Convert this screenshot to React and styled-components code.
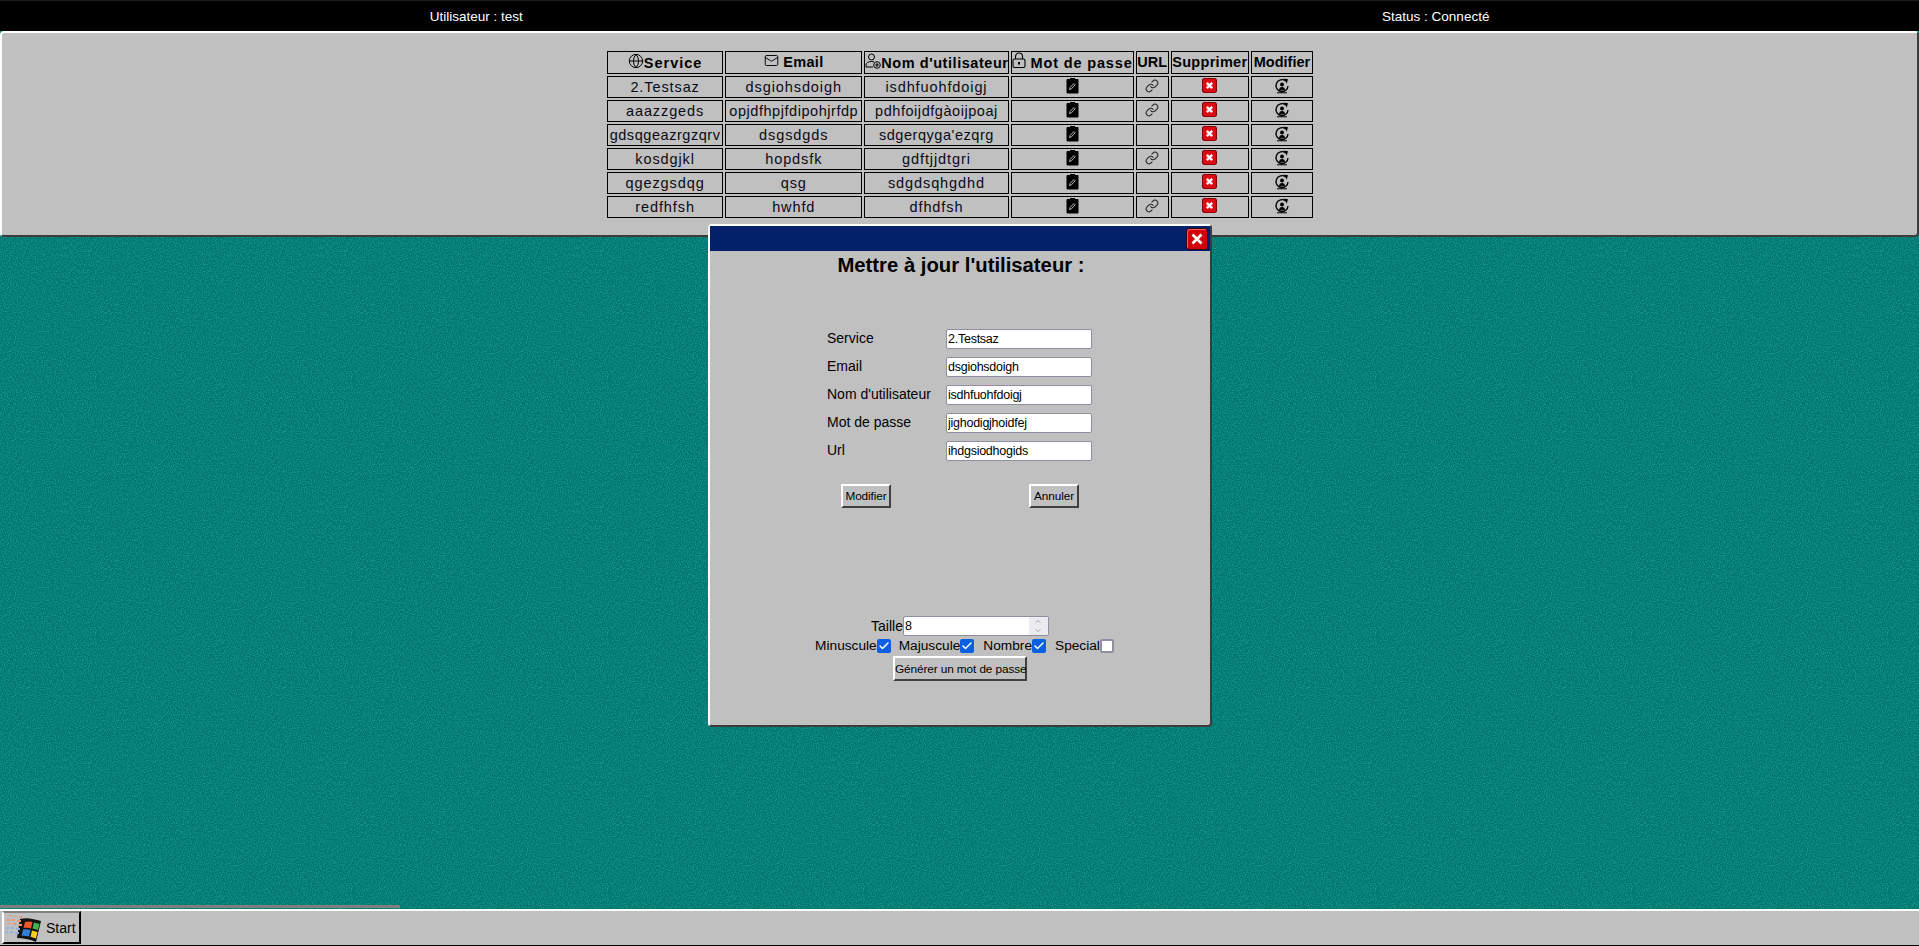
import React from 'react'
import styled, { createGlobalStyle } from 'styled-components'
import { Globe, Mail, Link, ChevronUp, ChevronDown, Check } from 'lucide-react'

const noise = `data:image/svg+xml,${encodeURIComponent(
  `<svg xmlns="http://www.w3.org/2000/svg" width="256" height="256"><filter id="n" color-interpolation-filters="sRGB"><feTurbulence type="fractalNoise" baseFrequency="0.85" numOctaves="2" stitchTiles="stitch"/><feColorMatrix values="0 0 0 0 0.08 0 0 0 0 0.6 0 0 0 0 0.56 2.4 0 0 0 -0.85"/></filter><rect width="256" height="256" fill="#00716d"/><rect width="256" height="256" filter="url(#n)"/></svg>`
)}`

const GlobalStyle = createGlobalStyle`
    html, body {
        margin: 0;
        padding: 0;
        height: 100%;
        overflow: hidden;
    }
    body {
        font-family: "Liberation Sans", Arial, sans-serif;
        color: #000;
    }
    * {
        box-sizing: border-box;
    }
`

const Page = styled.div`
    display: flex;
    flex-direction: column;
    height: 946px;
    position: relative;
    background-color: #008080;
    background-image: url("${noise}");
`

const Header = styled.header`
    display: grid;
    grid-template-columns: 1fr 1fr;
    height: 31px;
    align-items: center;
    justify-items: center;
    background: #000;
    border-top: 1px solid #1a1a22;
    color: #fff;
    font-size: 13.5px;
`

const HeaderText = styled.span`
    padding-right: 7px;
`

const ListPanel = styled.section`
    display: flex;
    justify-content: center;
    height: 206px;
    padding: 18px 0 0 1px;
    background: #c0c0c0;
    border-top: 2px solid #fff;
    border-left: 2px solid #fff;
    border-right: 2px solid #3c3c3c;
    border-bottom: 2px solid #3c3c3c;
    border-radius: 4px;
`

const Table = styled.table`
    border-collapse: separate;
    border-spacing: 2px;
    table-layout: fixed;
    width: 710px;
    height: 171px;
    margin-top: -2px;
`

const Th = styled.th`
    width: ${p => p.$w}px;
    height: 22px;
    padding: 0 0 2px;
    border: 1px solid #000;
    font-size: 14.5px;
    line-height: 16px;
    font-weight: 700;
    letter-spacing: ${p => p.$ls || 0}px;
    white-space: nowrap;
    overflow: hidden;

    svg {
        vertical-align: -1px;
    }
`

const Td = styled.td`
    height: 22px;
    padding: 1px 0 0;
    border: 1px solid #000;
    font-size: 14.5px;
    letter-spacing: ${p => p.$tight ? 0.55 : 0.9}px;
    text-align: center;
    white-space: nowrap;
    overflow: hidden;
    line-height: 1;
    color: #0a0a14;

    svg {
        display: block;
        margin: -4px auto 0;
    }
`

const Desktop = styled.main`
    flex: 1;
    display: flex;
    align-items: flex-end;
`

const DockEdge = styled.div`
    width: 400px;
    height: 3px;
    margin-bottom: 1px;
    background: #7f7f7f;
`

const Taskbar = styled.footer`
    display: flex;
    height: 37px;
    padding: 0 0 0 2px;
    background: #c0c0c0;
    border-top: 2px solid #fff;
    border-bottom: 1px solid #000;
`

const StartButton = styled.button`
    display: flex;
    align-items: center;
    gap: 5px;
    width: 79px;
    height: 33px;
    padding: 0 0 0 1px;
    background: #c0c0c0;
    border: 0;
    border-top: 2px solid #808080;
    border-left: 2px solid #fff;
    border-right: 2px solid #000;
    border-bottom: 2px solid #000;
    font-family: inherit;
    font-size: 14px;
`

const Modal = styled.div`
    position: absolute;
    left: 708px;
    top: 224px;
    width: 504px;
    height: 503px;
    display: flex;
    flex-direction: column;
    background: #c0c0c0;
    border-top: 2px solid #fff;
    border-left: 2px solid #fff;
    border-right: 2px solid #3c3c3c;
    border-bottom: 2px solid #3c3c3c;
    border-radius: 4px;
`

const TitleBar = styled.div`
    display: flex;
    justify-content: flex-end;
    align-items: center;
    height: 25px;
    padding-right: 2px;
    background: #03216a;
`

const CloseButton = styled.button`
    display: flex;
    align-items: center;
    justify-content: center;
    width: 22px;
    height: 22px;
    padding: 0;
    border: 1px solid #33050f;
    border-radius: 3px;
    background: #d3000c;
    box-shadow: inset 1px 1px 0 #ff5a55;
`

const ModalTitle = styled.h2`
    margin: 0;
    height: 78px;
    padding: 2px 0 0 2px;
    font-size: 20.3px;
    line-height: 24px;
    font-weight: 700;
    text-align: center;
`

const Form = styled.form`
    display: flex;
    flex-direction: column;
    gap: 8px;
    padding-left: 117px;
`

const Field = styled.label`
    display: grid;
    grid-template-columns: 119px 146px;
    align-items: center;
    height: 20px;
    font-size: 14px;
`

const FieldName = styled.span`
    margin-bottom: 2px;
`

const Input = styled.input`
    width: ${p => p.$w || 146}px;
    height: 20px;
    padding: 0 1px;
    background: #fff;
    border: 1px solid #8f8f9d;
    border-radius: 2px;
    font-family: inherit;
    font-size: 12.5px;
    letter-spacing: -0.25px;
    color: #000;
    outline: none;
`

const Actions = styled.div`
    display: flex;
    justify-content: space-between;
    width: 238px;
    margin: 15px 0 0 14px;
`

const Win95Button = styled.button`
    height: ${p => p.$h || 24}px;
    width: ${p => p.$w}px;
    margin-left: ${p => p.$shift || 0}px;
    padding: 0;
    background: #c0c0c0;
    border-top: 2px solid #fff;
    border-left: 2px solid #fff;
    border-right: 2px solid #404040;
    border-bottom: 2px solid #404040;
    font-family: inherit;
    font-size: 11.8px;
    letter-spacing: -0.1px;
    white-space: nowrap;
    color: #000;
`

const Generator = styled.div`
    display: flex;
    flex-direction: column;
    align-items: center;
    margin: 108px 0 0 -2px;
    font-size: 14px;
`

const SizeRow = styled.div`
    display: flex;
    align-items: center;
    height: 20px;
    padding-left: 2px;
`

const SpinBox = styled.div`
    position: relative;
    display: flex;
`

const Spin = styled.span`
    position: absolute;
    right: 1px;
    top: 1px;
    bottom: 1px;
    width: 19px;
    display: flex;
    flex-direction: column;
    align-items: center;
    justify-content: center;
    background: #ececf0;
    color: #8a8a94;
`

const CheckRow = styled.div`
    display: flex;
    align-items: center;
    height: 17px;
    margin: 1px 0 2px 11px;
    font-size: 13.7px;
`

const CheckLabel = styled.label`
    display: flex;
    align-items: center;
    margin-right: ${p => p.$gap || 0}px;
`

const Box = styled.span`
    display: flex;
    align-items: center;
    justify-content: center;
    width: 14px;
    height: 14px;
    border-radius: 2px;
    background: ${p => p.$on ? '#0b5fe0' : '#fff'};
    border: ${p => p.$on ? '0' : '2px solid #8f8f9d'};
    color: #fff;
`

const rows = [
    ['2.Testsaz', 'dsgiohsdoigh', 'isdhfuohfdoigj', true],
    ['aaazzgeds', 'opjdfhpjfdipohjrfdp', 'pdhfoijdfgàoijpoaj', true],
    ['gdsqgeazrgzqrv', 'dsgsdgds', "sdgerqyga'ezqrg", false],
    ['kosdgjkl', 'hopdsfk', 'gdftjjdtgri', true],
    ['qgezgsdqg', 'qsg', 'sdgdsqhgdhd', false],
    ['redfhfsh', 'hwhfd', 'dfhdfsh', true],
]

const fields = [
    ['Service', '2.Testsaz'],
    ['Email', 'dsgiohsdoigh'],
    ["Nom d'utilisateur", 'isdhfuohfdoigj'],
    ['Mot de passe', 'jighodigjhoidfej'],
    ['Url', 'ihdgsiodhogids'],
]

const UserAddIcon = () => (
    <svg width="16" height="16" viewBox="0 0 16 16" fill="none" stroke="#000" strokeWidth="1">
        <circle cx="6.500" cy="4" r="3" />
        <path d="M1 14v-2c0-2 2-3.500 5.500-3.500 1 0 2 .1 2.500.4M1 14h7" />
        <circle cx="12" cy="12" r="3.300" fill="#c0c0c0" />
        <path d="M12 10v4M10 12h4" />
    </svg>
)

const LockIcon = () => (
    <svg width="14" height="17" viewBox="0 0 14 17" fill="none" stroke="#000" strokeWidth="1.100">
        <path d="M3.500 7V4.500a3.500 3.500 0 0 1 7 0V7" />
        <rect x="1" y="7" width="12" height="8.500" rx="1.500" />
        <path d="M7 10v2.500" strokeWidth="2" />
    </svg>
)

const ClipboardIcon = () => (
    <svg width="13" height="17" viewBox="0 0 13 17">
        <path d="M4 2V1h5v1h2.500a1 1 0 0 1 1 1v12.500a1 1 0 0 1-1 1h-10a1 1 0 0 1-1-1V3a1 1 0 0 1 1-1z" fill="#000" />
        <path d="M3.500 12.500l.6-2 3.800-4 1.300 1.300-3.800 4z" fill="none" stroke="#c8c8c8" strokeWidth="0.9" />
    </svg>
)

const DeleteIcon = () => (
    <svg width="15" height="15" viewBox="0 0 14 14">
        <rect x="0.500" y="0.500" width="13" height="13" rx="2" fill="#dd0a14" stroke="#8c0008" />
        <path d="M4.500 4.500l5 5M9.500 4.500l-5 5" stroke="#fff" strokeWidth="2.200" />
    </svg>
)

const ModifyIcon = () => (
    <svg width="16" height="16" viewBox="0 0 16 16">
        <path d="M11.500 2.800A6 6 0 1 0 14 8" fill="none" stroke="#000" strokeWidth="1.400" />
        <path d="M9.500 .5l4.500.7-1.200 4.300z" fill="#000" />
        <circle cx="8" cy="6.500" r="2" fill="#000" />
        <path d="M5 12.500c0-2.500 1.200-3.500 3-3.500s3 1 3 3.500z" fill="#000" />
        <path d="M3 14.800h10" stroke="#000" />
    </svg>
)

const WindowsLogo = () => (
    <svg width="36" height="30" viewBox="0 0 36 30">
        <path d="M15 6c7-2 14 0 21 2l-5 21c-7-3-13-4-19-4z" fill="#111" />
        <path d="M20 9c2.500-.8 5-.6 7.500 0l-1.500 6.500c-2.500-.8-5-1-7.500-.5z" fill="#f0562a" />
        <path d="M29 9.500l5.500 1.500-1.500 6-5.500-1.500z" fill="#43b54b" />
        <path d="M18 16.500c2.500-.5 5-.3 7.500.5L24 23.500c-2.500-.7-5-1-7.500-.7z" fill="#2f7fd6" />
        <path d="M27 17.500l5.500 1.500-1.500 6.500-5.500-1.700z" fill="#f6cc18" />
        <g fill="#e9967a">
            <rect x="4" y="2" width="3" height="1" /><rect x="9" y="3" width="3" height="1" /><rect x="14" y="3" width="3" height="2" />
            <rect x="2" y="6" width="3" height="2" /><rect x="7" y="6" width="3" height="2" /><rect x="12" y="7" width="4" height="2" />
            <rect x="3" y="10" width="3" height="1" /><rect x="8" y="10" width="3" height="2" /><rect x="13" y="11" width="4" height="2" />
        </g>
        <g fill="#8fb2de">
            <rect x="1" y="14" width="3" height="2" /><rect x="6" y="14" width="3" height="2" /><rect x="11" y="15" width="4" height="2" />
            <rect x="0" y="18" width="3" height="2" /><rect x="5" y="18" width="3" height="2" /><rect x="10" y="19" width="4" height="2" />
        </g>
    </svg>
)

export default function App() {
    return (
        <Page>
            <GlobalStyle />
            <Header>
                <HeaderText>Utilisateur : test</HeaderText>
                <HeaderText>Status : Connecté</HeaderText>
            </Header>
            <ListPanel>
                <Table>
                    <thead>
                        <tr>
                            <Th $w={116} $ls={1}><Globe size={16} strokeWidth={1.5} />Service</Th>
                            <Th $w={137} $ls={0.3}><Mail size={15} strokeWidth={1.5} /> Email</Th>
                            <Th $w={144} $ls={0.55}><UserAddIcon />Nom d'utilisateur</Th>
                            <Th $w={123} $ls={0.85}><LockIcon /> Mot de passe</Th>
                            <Th $w={33}>URL</Th>
                            <Th $w={78} $ls={0.3}>Supprimer</Th>
                            <Th $w={62}>Modifier</Th>
                        </tr>
                    </thead>
                    <tbody>
                        {rows.map(([service, email, user, hasUrl]) => (
                            <tr key={service}>
                                <Td $tight={service.length > 12}>{service}</Td>
                                <Td $tight={email.length > 12}>{email}</Td>
                                <Td $tight={user.length > 14}>{user}</Td>
                                <Td><ClipboardIcon /></Td>
                                <Td>{hasUrl && <Link size={14} strokeWidth={1.8} color="#222" />}</Td>
                                <Td><DeleteIcon /></Td>
                                <Td><ModifyIcon /></Td>
                            </tr>
                        ))}
                    </tbody>
                </Table>
            </ListPanel>
            <Desktop>
                <DockEdge />
            </Desktop>
            <Taskbar>
                <StartButton><WindowsLogo />Start</StartButton>
            </Taskbar>

            <Modal>
                <TitleBar>
                    <CloseButton aria-label="Fermer">
                        <svg width="14" height="14" viewBox="0 0 14 14">
                            <path d="M2.500 2.500l9 9M11.500 2.500l-9 9" stroke="#fff" strokeWidth="2.600" />
                        </svg>
                    </CloseButton>
                </TitleBar>
                <ModalTitle>Mettre à jour l'utilisateur :</ModalTitle>
                <Form>
                    {fields.map(([label, value]) => (
                        <Field key={label}>
                            <FieldName>{label}</FieldName>
                            <Input defaultValue={value} />
                        </Field>
                    ))}
                    <Actions>
                        <Win95Button type="button" $w={50}>Modifier</Win95Button>
                        <Win95Button type="button" $w={50}>Annuler</Win95Button>
                    </Actions>
                </Form>
                <Generator>
                    <SizeRow>
                        Taille
                        <SpinBox>
                            <Input defaultValue="8" $w={146} />
                            <Spin><ChevronUp size={10} /><ChevronDown size={10} /></Spin>
                        </SpinBox>
                    </SizeRow>
                    <CheckRow>
                        <CheckLabel $gap={8}>Minuscule<Box $on><Check size={12} strokeWidth={3} /></Box></CheckLabel>
                        <CheckLabel $gap={9}>Majuscule<Box $on><Check size={12} strokeWidth={3} /></Box></CheckLabel>
                        <CheckLabel $gap={9}>Nombre<Box $on><Check size={12} strokeWidth={3} /></Box></CheckLabel>
                        <CheckLabel>Special<Box /></CheckLabel>
                    </CheckRow>
                    <Win95Button type="button" $w={134} $h={25} $shift={2}>Générer un mot de passe</Win95Button>
                </Generator>
            </Modal>
        </Page>
    )
}
